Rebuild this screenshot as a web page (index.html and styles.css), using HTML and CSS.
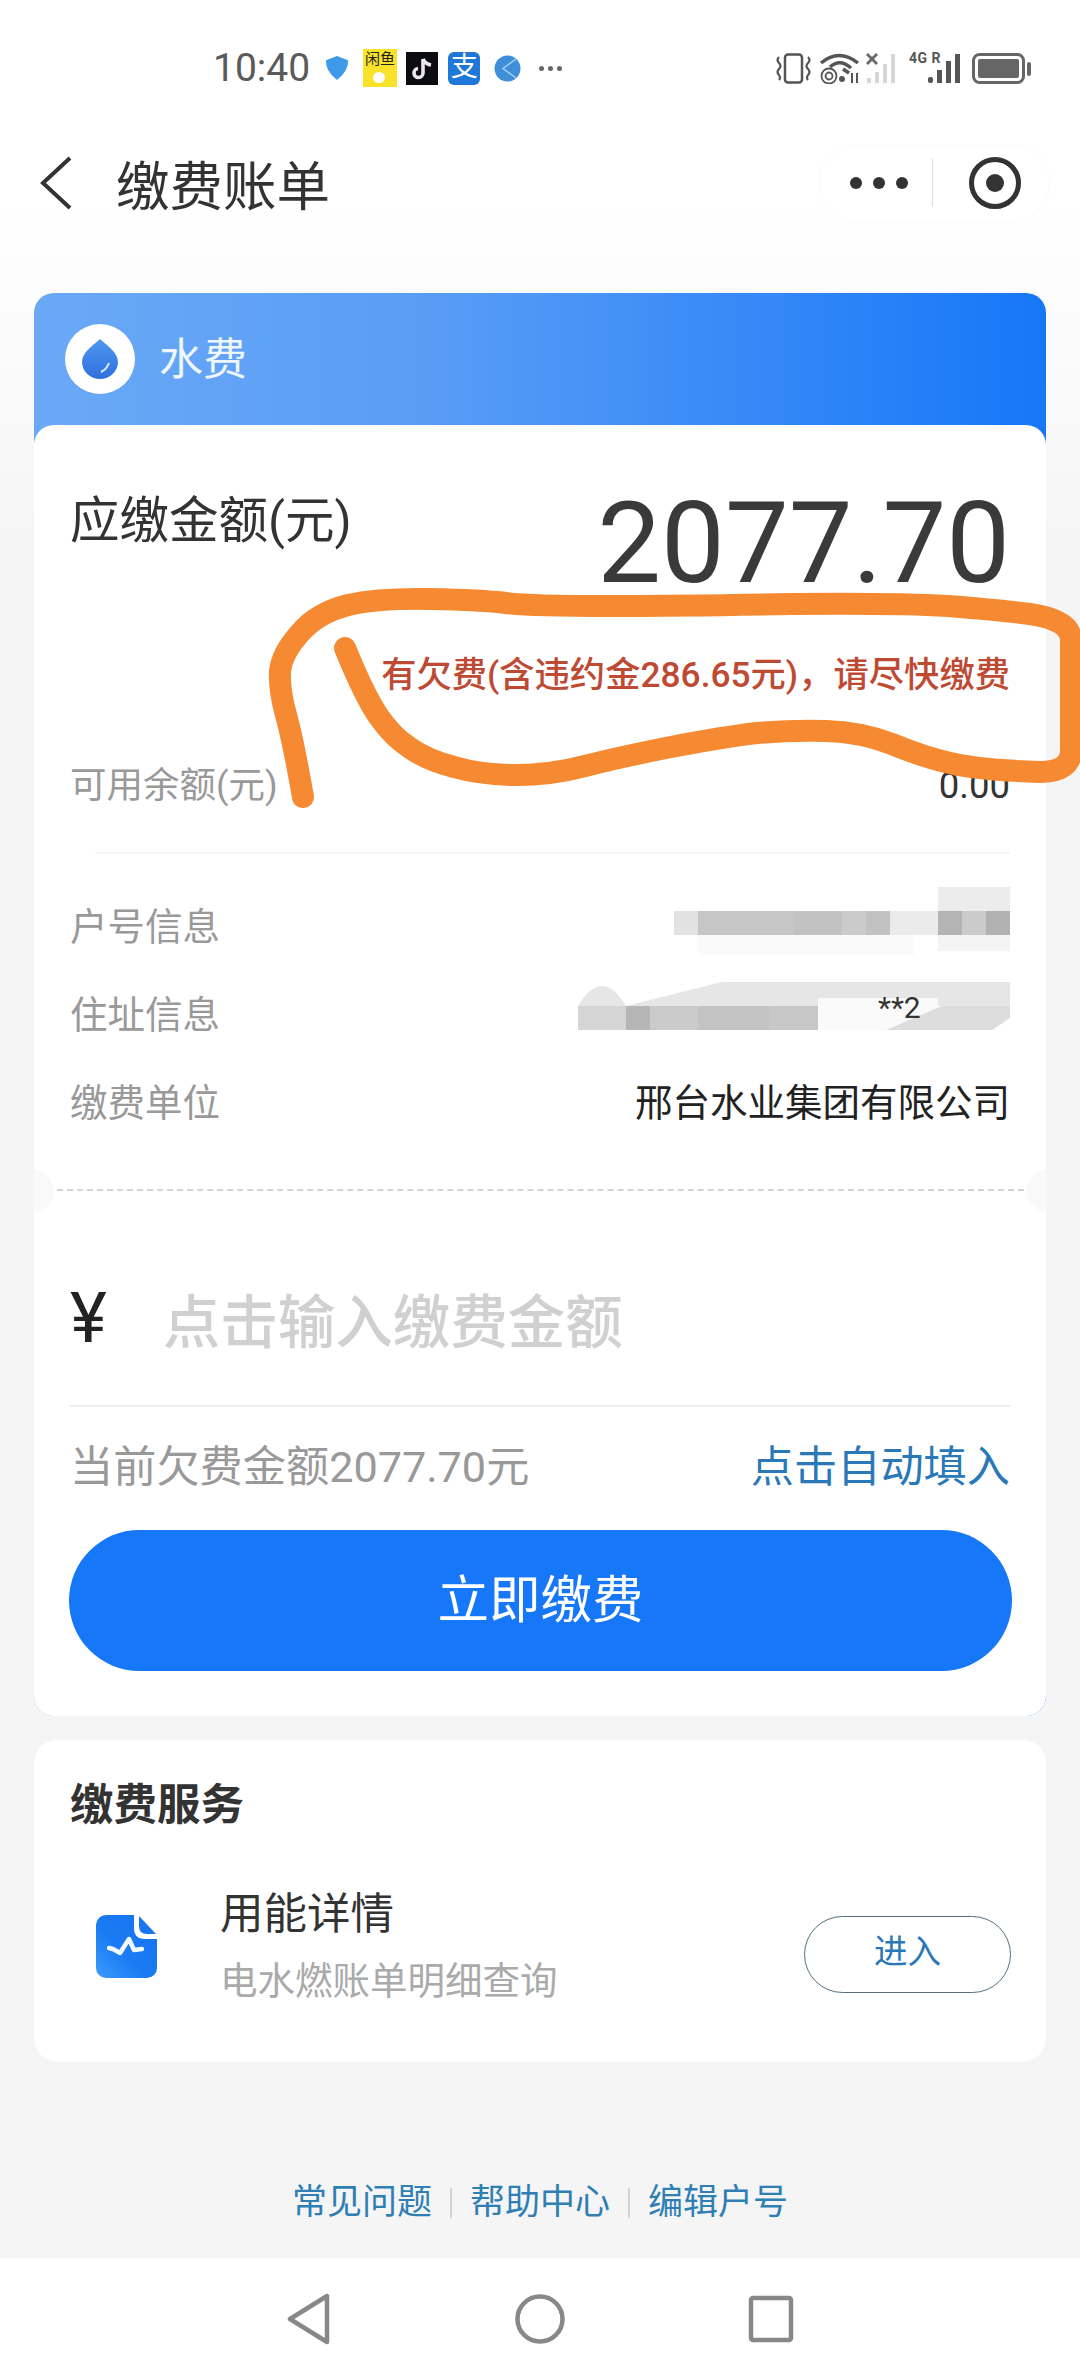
FILE: index.html
```html
<!DOCTYPE html>
<html lang="zh-CN">
<head>
  <meta charset="utf-8">
  <title>缴费账单</title>
  <link rel="stylesheet" href="styles.css">
</head>
<body>
<div class="page">

  <div class="status">
    <div class="status-left">
      <span class="time">10:40</span>
      <svg class="ic-shield" width="24" height="24" viewBox="0 0 23 23"><path d="M11.5 0 L22 4 Q23 14 11.5 23 Q0 14 1 4z" fill="#3d9be9"/></svg>
      <span class="app-fish">闲鱼<i></i></span>
      <svg class="ic-app" width="32" height="33" viewBox="0 0 32 33"><rect width="32" height="33" fill="#0b0b12"/><path d="M17 7 V21 A4.5 4.5 0 1 1 12 16.5 M17 7 Q19 12 25 13" fill="none" stroke="#efe6f0" stroke-width="3.6"/></svg>
      <span class="app-ali">支</span>
      <svg class="ic-app" width="27" height="27" viewBox="0 0 27 27"><circle cx="13.500" cy="13.500" r="13" fill="#3f8fd8"/><path d="M22 4 L9 13.500 L22 23" fill="none" stroke="#a9d4f7" stroke-width="1.400"/></svg>
      <span class="more-dots"><i></i><i></i><i></i></span>
    </div>
    <div class="status-right">
      <svg width="37" height="31" viewBox="0 0 37 31" fill="none" stroke="#555"><rect x="10" y="1.500" width="17" height="28" rx="3" stroke-width="2.500"/><path d="M4 4 Q1 7 4 10 Q7 13 4 16 Q1 19 4 22 Q6 25 4 27 M33 4 Q36 7 33 10 Q30 13 33 16 Q36 19 33 22 Q31 25 33 27" stroke-width="2.200"/></svg>
      <svg width="41" height="32" viewBox="0 0 41 32" fill="none" stroke="#555"><path d="M2 11 Q20 -4 39 11" stroke-width="3.500"/><path d="M11 15 Q21 6 32 16" stroke-width="3.500"/><path d="M24 17 L30 21" stroke-width="3.500"/><circle cx="10" cy="24" r="7.500" stroke-width="1.800"/><circle cx="10" cy="24" r="3.500" stroke-width="1.800"/><circle cx="23" cy="27" r="3" fill="#555" stroke="none"/><path d="M33 21 V31 M38 21 V31" stroke-width="2"/></svg>
      <svg class="sig-off" width="32" height="31" viewBox="0 0 32 31"><path d="M1 1 L11 11 M11 1 L1 11" stroke="#666" stroke-width="2.800"/><g fill="#d6d6d6"><rect x="1" y="25" width="4" height="5"/><rect x="9" y="19" width="4" height="11"/><rect x="17" y="11" width="4" height="19"/><rect x="25" y="1" width="4" height="29"/></g></svg>
      <div class="sig-4g">
        <span class="net-label">4G R</span>
        <svg width="33" height="31" viewBox="0 0 33 31" fill="#555"><rect x="1" y="24" width="5" height="6" rx="2"/><rect x="10" y="17" width="5" height="13"/><rect x="19" y="8" width="5" height="22"/><rect x="28" y="1" width="5" height="29"/></svg>
      </div>
      <svg class="ic-batt" width="59" height="31" viewBox="0 0 59 31" fill="none"><rect x="1.500" y="1.500" width="50" height="28" rx="6" stroke="#666" stroke-width="3"/><rect x="6" y="6" width="41" height="19" rx="2" fill="#666"/><rect x="55" y="9" width="4" height="14" rx="2" fill="#666"/></svg>
    </div>
  </div>

  <div class="topbar">
    <svg class="back" width="32" height="54" viewBox="0 0 32 54"><path d="M30 2 L3 27 L30 52" fill="none" stroke="#333" stroke-width="4"/></svg>
    <div class="page-title">缴费账单</div>
    <div class="capsule">
      <span class="cap-dots"><i></i><i></i><i></i></span>
      <span class="cap-line"></span>
      <svg width="54" height="54" viewBox="0 0 54 54"><circle cx="27" cy="27" r="23.500" fill="none" stroke="#333" stroke-width="5"/><circle cx="27" cy="27" r="9" fill="#333"/></svg>
    </div>
  </div>

  <div class="bill">
    <div class="bill-head">
      <span class="drop-wrap">
        <svg width="36" height="40" viewBox="0 0 36 40"><defs><linearGradient id="dropfill" x1="0" y1="0" x2="0" y2="1"><stop offset="0" stop-color="#4f97ef"/><stop offset="1" stop-color="#2f6fe0"/></linearGradient></defs><path d="M18 0 C26 7 36 14 36 23 A18 17 0 0 1 0 23 C0 14 10 7 18 0z" fill="url(#dropfill)"/><path d="M27 24 Q25 30 19 33" fill="none" stroke="#d8ecff" stroke-width="2"/></svg>
      </span>
      <span class="bill-kind">水费</span>
    </div>
    <div class="bill-body">
      <div class="amount-row">
        <div class="amount-label">应缴金额(元)</div>
        <div class="amount">2077.70</div>
      </div>
      <div class="warn">有欠费(含违约金286.65元)，请尽快缴费</div>
      <div class="balance-row">
        <span>可用余额(元)</span>
        <span class="balance">0.00</span>
      </div>
      <div class="rule"></div>

      <div class="info-row">
        <span>户号信息</span>
        <svg class="mosaic" width="336" height="72" viewBox="0 0 336 72">
          <rect x="0" y="24" width="24" height="24" fill="#e2e2e2"/>
          <rect x="24" y="24" width="96" height="24" fill="#c6c6c6"/>
          <rect x="120" y="24" width="48" height="24" fill="#c2c2c2"/>
          <rect x="168" y="24" width="24" height="24" fill="#cbcbcb"/>
          <rect x="192" y="24" width="24" height="24" fill="#c2c2c2"/>
          <rect x="216" y="24" width="48" height="24" fill="#ebebeb"/>
          <rect x="264" y="24" width="24" height="24" fill="#b4b4b4"/>
          <rect x="288" y="24" width="24" height="24" fill="#cbcbcb"/>
          <rect x="312" y="24" width="24" height="24" fill="#b2b2b2"/>
          <rect x="264" y="0" width="72" height="24" fill="#ececec"/>
          <rect x="264" y="48" width="72" height="16" fill="#f4f4f4"/>
          <rect x="24" y="48" width="216" height="20" fill="#fafafa"/>
        </svg>
      </div>
      <div class="info-row">
        <span>住址信息</span>
        <svg class="mosaic mosaic-up" width="432" height="48" viewBox="0 0 432 48">
          <path d="M0 48 V24 Q24 -16 48 24 L144 0 H432 V24 H0z" fill="#e6e6e6"/>
          <rect x="0" y="24" width="48" height="24" fill="#d6d6d6"/>
          <rect x="48" y="24" width="24" height="24" fill="#b6b6b6"/>
          <rect x="72" y="24" width="48" height="24" fill="#cbcbcb"/>
          <rect x="120" y="24" width="72" height="24" fill="#c4c4c4"/>
          <rect x="192" y="24" width="48" height="24" fill="#c8c8c8"/>
          <rect x="240" y="16" width="120" height="32" fill="#fafafa"/>
          <path d="M308 48 L364 24 H432 V36 L414 48z" fill="#dddddd"/>
          <text class="mosaic-text" x="300" y="36">**2</text>
        </svg>
      </div>
      <div class="info-row">
        <span>缴费单位</span>
        <span class="info-value">邢台水业集团有限公司</span>
      </div>

      <div class="tear"></div>

      <div class="pay-input">
        <span class="yen">¥</span>
        <span class="placeholder">点击输入缴费金额</span>
      </div>
      <div class="owed-row">
        <span class="owed">当前欠费金额2077.70元</span>
        <span class="autofill">点击自动填入</span>
      </div>
      <div class="pay-btn">立即缴费</div>
    </div>
  </div>

  <div class="service">
    <div class="service-title">缴费服务</div>
    <div class="service-row">
      <svg class="doc" width="61" height="63" viewBox="0 0 61 63">
        <defs><linearGradient id="docfill" x1="1" y1="0" x2="0" y2="1"><stop offset="0" stop-color="#1470ee"/><stop offset="0.6" stop-color="#1b7cf4"/><stop offset="1" stop-color="#3c9cfb"/></linearGradient></defs>
        <path d="M10 0 H38 V13 Q38 24 49 24 H61 V53 A10 10 0 0 1 51 63 H10 A10 10 0 0 1 0 53 V10 A10 10 0 0 1 10 0z" fill="url(#docfill)"/>
        <path d="M43 1 L60 19 H51 Q43 19 43 11z" fill="#1a76f0"/>
        <path d="M13 33 L17 34 L24 38 L33 24 L38 35 L46 34" fill="none" stroke="#f2f8ff" stroke-width="4.500" stroke-linecap="round" stroke-linejoin="round"/>
      </svg>
      <div class="service-text">
        <div class="service-name">用能详情</div>
        <div class="service-desc">电水燃账单明细查询</div>
      </div>
      <div class="enter-btn">进入</div>
    </div>
  </div>

  <div class="links">
    <span>常见问题</span><i></i><span>帮助中心</span><i></i><span>编辑户号</span>
  </div>

  <div class="navbar">
    <svg width="60" height="52" viewBox="0 0 60 52"><path d="M48 3 V49 L11 26z" fill="none" stroke="#888" stroke-width="4.500" stroke-linejoin="round"/></svg>
    <svg width="60" height="52" viewBox="0 0 60 52"><circle cx="30" cy="26" r="22.500" fill="none" stroke="#888" stroke-width="4.500"/></svg>
    <svg width="60" height="52" viewBox="0 0 60 52"><rect x="10" y="5" width="40" height="42" rx="2" fill="none" stroke="#888" stroke-width="4.500"/></svg>
  </div>

  <!-- hand drawn mark on top of the screenshot -->
  <svg class="scribble" width="1080" height="2376" viewBox="0 0 1080 2376">
    <path d="M303 797 Q293 740 286 715 Q279 690 280 671 Q282 653 300 633 Q317 613 348 605 Q379 598 430 599 Q482 600 506 603 Q530 606 610 606 Q689 606 792 604 Q896 603 948 606 Q999 610 1030 614 Q1071 620 1071 640 L1071 750 Q1071 772 1040 772 Q978 770 950 763 Q923 757 892 744 Q861 732 826 731 Q792 730 757 733 Q723 737 671 747 Q620 757 585 766 Q551 775 516 775 Q482 775 454 767 Q427 760 410 748 Q393 737 379 717 Q365 697 345 648" fill="none" stroke="#f58a33" stroke-width="22" stroke-linecap="round" stroke-linejoin="round"/>
  </svg>
</div>
</body>
</html>
```

FILE: styles.css
```css
html, body {
  margin: 0;
  padding: 0;
}

body {
  font-family: Roboto, "Noto Sans CJK SC", sans-serif;
  color: #333;
}

.page {
  position: relative;
  width: 1080px;
  height: 2376px;
  overflow: hidden;
  display: flex;
  flex-direction: column;
  background: linear-gradient(#fff 0, #fff 200px, #f5f5f5 560px);
}

/* status bar */
.status {
  height: 136px;
  flex: none;
  display: flex;
  align-items: center;
  justify-content: space-between;
  padding: 0 49px 0 213px;
}

.status-left, .status-right {
  display: flex;
  align-items: center;
}

.time {
  font-size: 39px;
  color: #5a5a5a;
  margin-right: 15px;
}

.ic-app {
  margin-left: 10px;
}

.app-fish {
  position: relative;
  width: 34px;
  height: 38px;
  margin-left: 14px;
  margin-right: 0;
  background: #f8e32a;
  font-size: 15px;
  line-height: 20px;
  text-align: center;
  color: #222;
}

.app-fish i {
  position: absolute;
  left: 10px;
  bottom: 4px;
  width: 12px;
  height: 11px;
  border-radius: 50%;
  background: #fff;
}

.ic-app:nth-of-type(2) {
  margin-left: 9px;
}

.app-ali {
  width: 32px;
  height: 33px;
  margin-left: 10px;
  border-radius: 6px;
  background: #1f78d8;
  color: #fff;
  font-size: 27px;
  line-height: 31px;
  text-align: center;
}

.app-ali + .ic-app {
  margin-left: 14px;
}

.more-dots {
  display: flex;
  gap: 4px;
  margin-left: 18px;
}

.more-dots i {
  width: 5px;
  height: 5px;
  border-radius: 50%;
  background: #666;
}

.status-right svg {
  flex: none;
}

.status-right > svg:nth-child(2) {
  margin-left: 7px;
}

.sig-off {
  margin-left: 6px;
}

.sig-4g {
  position: relative;
  margin-left: 11px;
  padding-left: 18px;
  display: flex;
}

.net-label {
  position: absolute;
  left: 0;
  top: -3px;
  font-size: 14px;
  font-weight: 700;
  color: #555;
  white-space: nowrap;
  letter-spacing: 0.5px;
}

.ic-batt {
  margin-left: 12px;
}

/* title bar */
.topbar {
  height: 94px;
  flex: none;
  display: flex;
  align-items: center;
  padding-left: 40px;
}

.page-title {
  margin-left: 44px;
  font-family: "Noto Sans CJK SC", sans-serif;
  font-size: 53.500px;
  color: #333;
  line-height: 60px;
}

.back {
  flex: none;
}

.capsule {
  margin-left: auto;
  margin-right: 30px;
  display: flex;
  align-items: center;
  height: 76px;
  padding: 0 27px 0 30px;
  border: 1px solid #fbfbfb;
  border-radius: 38px;
  background: #fff;
}

.cap-dots {
  display: flex;
  gap: 11px;
}

.cap-dots i {
  width: 12px;
  height: 12px;
  border-radius: 50%;
  background: #333;
}

.cap-line {
  width: 1px;
  height: 48px;
  margin: 0 35px 0 24px;
  background: #ddd;
}

/* bill card */
.bill {
  flex: none;
  margin: 63px 34px 0;
  border-radius: 20px;
  overflow: hidden;
  background: linear-gradient(90deg, #6aa9f6 0, #589cf6 40%, #1677f8 100%);
}

.bill-head {
  height: 132px;
  display: flex;
  align-items: center;
  padding-left: 31px;
}

.drop-wrap {
  width: 70px;
  height: 70px;
  border-radius: 50%;
  background: #fff;
  display: flex;
  align-items: center;
  justify-content: center;
}

.bill-kind {
  margin-left: 24px;
  padding-bottom: 6px;
  font-family: "Noto Sans CJK SC", sans-serif;
  font-size: 44px;
  color: #eef6ff;
}

.bill-body {
  position: relative;
  padding: 59px 35px 45px 36px;
  background: #fff;
  border-radius: 20px 20px 0 0;
}

.amount-row {
  display: flex;
  justify-content: space-between;
  align-items: flex-start;
  padding-right: 1px;
}

.amount-label {
  margin-top: 7px;
  font-size: 49.500px;
  line-height: 60px;
  color: #333;
}

.amount {
  font-size: 113.500px;
  line-height: 120px;
  color: #3a3a3a;
}

.warn {
  margin-top: 46px;
  padding-right: 1px;
  text-align: right;
  font-size: 35.300px;
  line-height: 50px;
  font-weight: 500;
  color: #bf4a33;
}

.balance-row {
  margin-top: 61px;
  padding-right: 1px;
  display: flex;
  justify-content: space-between;
  font-size: 36.500px;
  line-height: 50px;
  color: #999;
}

.balance {
  color: #333;
}

.rule {
  height: 2px;
  margin: 41px 1px 25px 25px;
  background: #f5f5f5;
}

.info-row {
  height: 88px;
  padding-right: 1px;
  display: flex;
  justify-content: space-between;
  align-items: center;
  font-size: 37.500px;
  color: #999;
}

.info-value {
  color: #222;
}

.mosaic {
  flex: none;
}

.mosaic-up {
  margin-top: -10px;
}

.mosaic-text {
  font-size: 30px;
  fill: #333;
}

.tear {
  position: relative;
  margin: 46px -13px 39px -13px;
  border-top: 2px dashed #d4d4d4;
}

.tear::before, .tear::after {
  content: "";
  position: absolute;
  top: -21px;
  width: 40px;
  height: 42px;
  border-radius: 50%;
  background: #f9f9f9;
}

.tear::before {
  left: -43px;
}

.tear::after {
  right: -43px;
}

.pay-input {
  height: 177px;
  box-sizing: border-box;
  margin-right: 1px;
  display: flex;
  align-items: center;
  border-bottom: 2px solid #eee;
}

.yen {
  font-size: 70px;
  line-height: 80px;
  color: #222;
}

.placeholder {
  margin-left: 56px;
  font-family: "Noto Sans CJK SC", sans-serif;
  font-size: 57.500px;
  font-weight: 500;
  color: #d0d0d0;
}

.owed-row {
  margin-top: 31px;
  padding-right: 1px;
  display: flex;
  justify-content: space-between;
  line-height: 60px;
  font-size: 43.200px;
}

.owed {
  color: #999;
}

.autofill {
  color: #2a78b8;
}

.pay-btn {
  height: 141px;
  margin: 32px -1px 0 -1px;
  border-radius: 71px;
  background: #1677f8;
  color: #fff;
  font-size: 51.500px;
  line-height: 141px;
  text-align: center;
}

/* service card */
.service {
  flex: none;
  height: 322px;
  box-sizing: border-box;
  margin: 24px 34px 0;
  padding: 36px 35px 0 36px;
  border-radius: 24px;
  background: #fff;
}

.service-title {
  font-size: 43.500px;
  line-height: 60px;
  font-weight: 700;
  color: #333;
}

.service-row {
  margin-top: 51px;
  display: flex;
  align-items: center;
}

.doc {
  flex: none;
  margin-left: 26px;
}

.service-text {
  margin-left: 63px;
}

.service-name {
  font-size: 43.500px;
  line-height: 56px;
  color: #333;
}

.service-desc {
  margin-top: 13px;
  font-size: 37.500px;
  line-height: 50px;
  color: #aaa;
}

.enter-btn {
  margin: 16px 0 0 auto;
  width: 207px;
  height: 77px;
  box-sizing: border-box;
  border: 1.500px solid #54707f;
  border-radius: 39px;
  font-size: 33.500px;
  line-height: 70px;
  text-align: center;
  color: #2a78b8;
}

/* footer */
.links {
  flex: none;
  margin-top: 116px;
  display: flex;
  align-items: center;
  justify-content: center;
  gap: 18px;
  font-size: 35px;
  line-height: 50px;
  color: #2f7fb5;
}

.links i {
  width: 2px;
  height: 30px;
  background: #d4d4d4;
}

.navbar {
  flex: none;
  height: 118px;
  margin-top: auto;
  display: flex;
  align-items: center;
  justify-content: center;
  gap: 171px;
  padding-top: 4px;
  box-sizing: border-box;
  background: #fff;
}

.scribble {
  position: absolute;
  left: 0;
  top: 0;
  pointer-events: none;
}
```
